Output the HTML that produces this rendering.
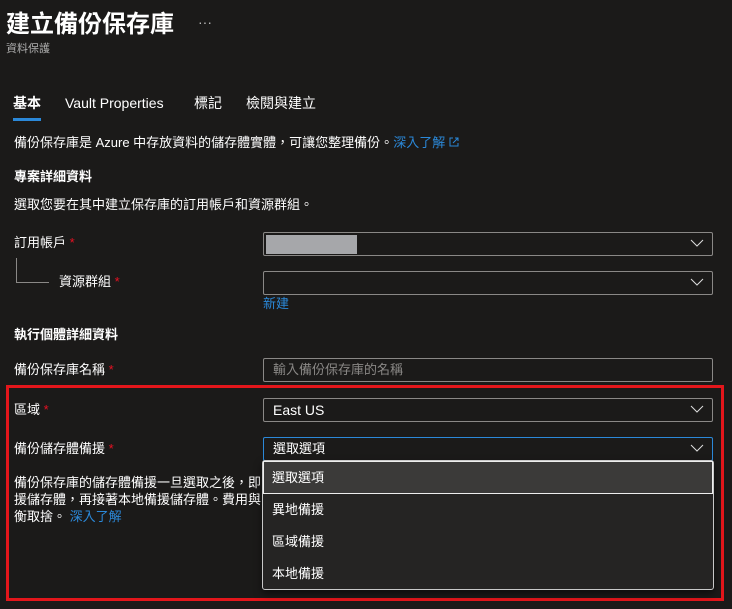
<!DOCTYPE html>
<html><head><meta charset="utf-8"><style>
*{margin:0;padding:0;box-sizing:border-box}
body{width:732px;height:609px;background:#1b1a19;color:#fff;font-family:"Liberation Sans","Noto Sans CJK TC",sans-serif;font-size:13px;position:relative;overflow:hidden}
.a{position:absolute;white-space:nowrap;line-height:17px}
.in{position:absolute;left:263px;width:450px;height:24px;border:1px solid #8a8886;border-radius:2px}
.chev{position:absolute;right:8px;top:6px}
.req{color:#e81123}
.link{color:#2b88d8}
.opt{position:absolute;left:0;width:100%;height:32px;padding-left:9px;line-height:32px}
</style></head><body>
<div class="a" style="left:6px;top:8px;font-size:24px;font-weight:bold;line-height:34px">建立備份保存庫</div>
<div class="a" style="left:198px;top:14px;color:#bbb;font-size:14px">···</div>
<div class="a" style="left:6px;top:41px;color:#b0b0b0;font-size:11px">資料保護</div>

<div class="a" style="left:13px;top:95px;font-size:14px;font-weight:bold">基本</div>
<div class="a" style="left:13px;top:118px;width:28px;height:3px;background:#2b88d8"></div>
<div class="a" style="left:65px;top:95px;font-size:14px">Vault Properties</div>
<div class="a" style="left:194px;top:95px;font-size:14px">標記</div>
<div class="a" style="left:246px;top:95px;font-size:14px">檢閱與建立</div>

<div class="a" style="left:14px;top:134px">備份保存庫是 Azure 中存放資料的儲存體實體，可讓您整理備份。<span class="link">深入了解</span> <svg width="10" height="10" viewBox="0 0 10 10" style="vertical-align:0"><path d="M4 1H1v8h8V6M6 1h3v3M9 1L4 6" stroke="#2b88d8" fill="none"/></svg></div>
<div class="a" style="left:14px;top:168px;font-weight:bold">專案詳細資料</div>
<div class="a" style="left:14px;top:196px">選取您要在其中建立保存庫的訂用帳戶和資源群組。</div>

<div class="a" style="left:14px;top:234px">訂用帳戶 <span class="req">*</span></div>
<div class="a" style="left:16px;top:258px;width:1px;height:24px;background:#8a8886"></div>
<div class="a" style="left:16px;top:282px;width:33px;height:1px;background:#8a8886"></div>
<div class="a" style="left:59px;top:273px">資源群組 <span class="req">*</span></div>
<div class="in" style="top:232px"><div style="position:absolute;left:2px;top:2px;width:91px;height:19px;background:#a6a7aa"></div><svg class="chev" width="14" height="9" viewBox="0 0 14 9"><path d="M1 1l6 6 6-6" stroke="#ddd" fill="none"/></svg></div>
<div class="in" style="top:271px"><svg class="chev" width="14" height="9" viewBox="0 0 14 9"><path d="M1 1l6 6 6-6" stroke="#ddd" fill="none"/></svg></div>
<div class="a link" style="left:263px;top:295px">新建</div>

<div class="a" style="left:14px;top:326px;font-weight:bold">執行個體詳細資料</div>
<div class="a" style="left:14px;top:361px">備份保存庫名稱 <span class="req">*</span></div>
<div class="in" style="top:358px;color:#8a8886;padding-left:9px;line-height:22px">輸入備份保存庫的名稱</div>

<div class="a" style="left:6px;top:385px;width:718px;height:216px;border:3px solid #e3161b"></div>
<div class="a" style="left:14px;top:401px">區域 <span class="req">*</span></div>
<div class="in" style="top:398px;padding-left:9px;line-height:22px;font-size:14px">East US<svg class="chev" width="14" height="9" viewBox="0 0 14 9"><path d="M1 1l6 6 6-6" stroke="#ddd" fill="none"/></svg></div>
<div class="a" style="left:14px;top:440px">備份儲存體備援 <span class="req">*</span></div>
<div class="in" style="top:437px;border-color:#2b88d8;padding-left:9px;line-height:22px">選取選項<svg class="chev" width="14" height="9" viewBox="0 0 14 9"><path d="M1 1l6 6 6-6" stroke="#ddd" fill="none"/></svg></div>
<div class="a" style="left:14px;top:474px;line-height:17px">備份保存庫的儲存體備援一旦選取之後，即<br>援儲存體，再接著本地備援儲存體。費用與<br>衡取捨。 <span class="link">深入了解</span></div>

<div class="a" style="left:262px;top:460px;width:452px;height:130px;background:#252423;border:1px solid #c8c8c8;border-radius:3px;box-shadow:0 4px 8px rgba(0,0,0,.5)">
<div class="opt" style="top:0;background:#3b3a39;border:1px solid #eee;height:33px;line-height:31px;padding-left:8px">選取選項</div>
<div class="opt" style="top:33px">異地備援</div>
<div class="opt" style="top:65px">區域備援</div>
<div class="opt" style="top:97px">本地備援</div>
</div>
</body></html>
